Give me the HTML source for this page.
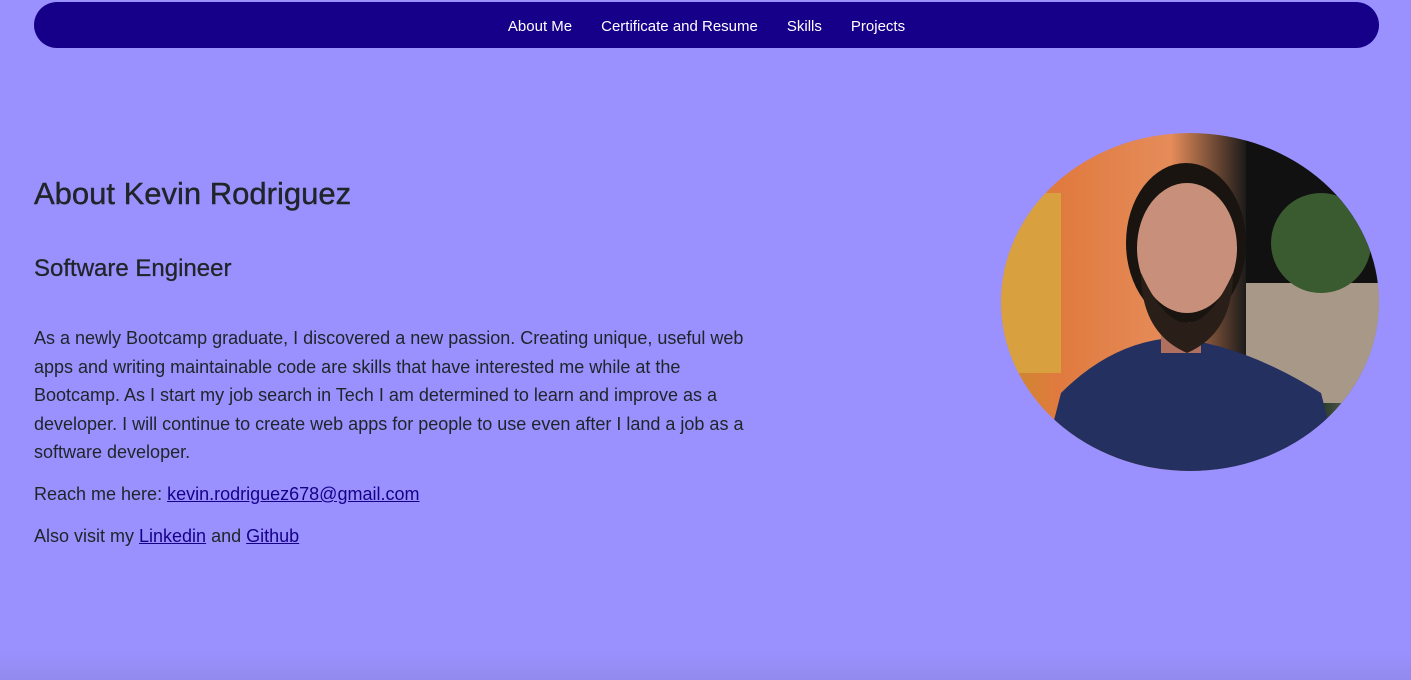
<!DOCTYPE html>
<html><head><style>
body{margin:0;width:1411px;height:680px;overflow:hidden;background:#9a91ff;font-family:"Liberation Sans",sans-serif;color:#212529;position:relative}
nav{position:absolute;left:34px;top:2px;width:1345px;height:46px;background:#16008a;border-radius:23px;display:flex;justify-content:center;align-items:center;gap:0}
nav a{color:#fff;text-decoration:none;font-size:15px;margin:0 14.5px;position:relative;top:1px}
h1{position:absolute;left:34px;top:176px;margin:0;font-size:31px;font-weight:normal;-webkit-text-stroke:0.4px #212529}
h2{position:absolute;left:34px;top:255px;margin:0;font-size:24px;font-weight:normal;-webkit-text-stroke:0.3px #212529}
.p{position:absolute;left:34px;font-size:18px;line-height:28.6px;width:725px;margin:0}
a.l{color:#16008a}
.photo{position:absolute;left:1001px;top:133px;width:378px;height:338px;border-radius:50%;overflow:hidden;background:linear-gradient(90deg,#c98a2a 0%,#e07a3f 15%,#e58c5a 45%,#1a1a1a 65%,#2a3a2a 85%,#8a8a80 100%)}
.shadow{position:absolute;left:0;right:0;top:650px;height:30px;background:linear-gradient(#9a91ff,#938aee)}
</style></head><body>
<nav><a>About Me</a><a>Certificate and Resume</a><a>Skills</a><a>Projects</a></nav>
<h1>About Kevin Rodriguez</h1>
<h2>Software Engineer</h2>
<p class="p" style="top:324px">As a newly Bootcamp graduate, I discovered a new passion. Creating unique, useful web apps and writing maintainable code are skills that have interested me while at the Bootcamp. As I start my job search in Tech I am determined to learn and improve as a developer. I will continue to create web apps for people to use even after I land a job as a software developer.</p>
<p class="p" style="top:480px">Reach me here: <a class="l" href="#">kevin.rodriguez678@gmail.com</a></p>
<p class="p" style="top:522px">Also visit my <a class="l" href="#">Linkedin</a> and <a class="l" href="#">Github</a></p>
<div class="photo">
<svg width="378" height="338" viewBox="0 0 378 338">
<rect x="0" y="60" width="60" height="180" fill="#d9a040"/>
<rect x="245" y="0" width="133" height="150" fill="#111"/>
<rect x="245" y="150" width="133" height="120" fill="#a89888"/>
<ellipse cx="320" cy="110" rx="50" ry="50" fill="#3a5a30"/>
<path d="M40 338 L60 260 Q110 210 170 205 Q240 210 320 260 L340 338 Z" fill="#243060"/>
<rect x="160" y="160" width="40" height="60" fill="#b07060"/>
<ellipse cx="185" cy="110" rx="60" ry="80" fill="#1a1410"/>
<ellipse cx="186" cy="115" rx="50" ry="65" fill="#c8907a"/>
<path d="M140 140 Q186 240 232 140 Q232 200 186 220 Q140 200 140 140Z" fill="#2a1f18"/>
</svg>
</div>
<div class="shadow"></div>
</body></html>
